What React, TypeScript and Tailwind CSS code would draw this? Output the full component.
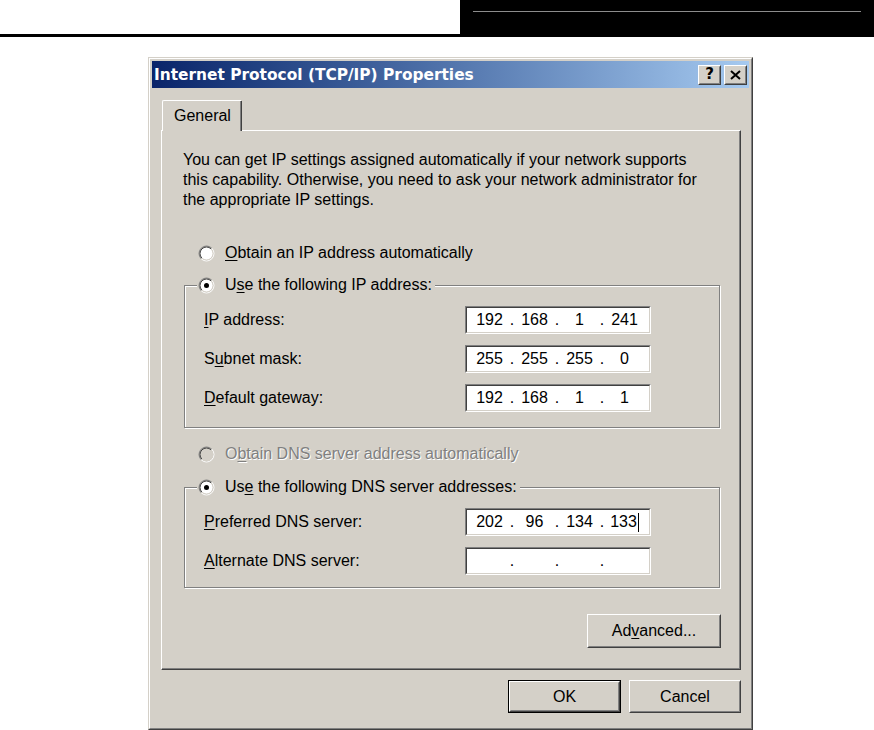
import React from "react";

type RadioProps = { checked?: boolean; disabled?: boolean };

const Radio = ({ checked = false, disabled = false }: RadioProps) => {
  const c = 8.5;
  const arc = (r: number, topLeft: boolean) => {
    const d = r * Math.SQRT1_2;
    return topLeft
      ? `M ${c - d} ${c + d} A ${r} ${r} 0 0 1 ${c + d} ${c - d}`
      : `M ${c + d} ${c - d} A ${r} ${r} 0 0 1 ${c - d} ${c + d}`;
  };
  return (
    <svg width="17" height="17" viewBox="0 0 17 17" className="shrink-0 block">
      <circle cx={c} cy={c} r={6.5} fill={disabled ? "#d4d0c8" : "#ffffff"} />
      <path d={arc(7.5, true)} stroke="#808080" strokeWidth="1" fill="none" />
      <path d={arc(7.5, false)} stroke="#ffffff" strokeWidth="1" fill="none" />
      <path d={arc(6.5, true)} stroke="#404040" strokeWidth="1" fill="none" />
      <path d={arc(6.5, false)} stroke="#d4d0c8" strokeWidth="1" fill="none" />
      {checked && <circle cx={c} cy={c} r={2.5} fill="#000000" />}
    </svg>
  );
};

const U = ({ children }: { children: React.ReactNode }) => (
  <span className="underline underline-offset-[2px]">{children}</span>
);

const Btn = ({
  children,
  className = "",
  isDefault = false,
}: {
  children: React.ReactNode;
  className?: string;
  isDefault?: boolean;
}) => (
  <div className={`${isDefault ? "border border-black" : ""} ${className}`}>
    <div className="h-full border border-t-white border-l-white border-r-[#404040] border-b-[#404040]">
      <div className="h-full border border-t-[#d4d0c8] border-l-[#d4d0c8] border-r-[#808080] border-b-[#808080] flex items-center justify-center">
        {children}
      </div>
    </div>
  </div>
);

const TitleBtn = ({ children, className = "" }: { children: React.ReactNode; className?: string }) => (
  <div className={`w-[23px] h-[20px] bg-[#d4d0c8] border border-t-white border-l-white border-r-[#404040] border-b-[#404040] ${className}`}>
    <div className="h-full border border-t-[#d4d0c8] border-l-[#d4d0c8] border-r-[#808080] border-b-[#808080] flex items-center justify-center">
      {children}
    </div>
  </div>
);

const IpField = ({ parts, caret = false }: { parts: string[]; caret?: boolean }) => (
  <div className="w-[186px] h-[28px] border border-t-[#808080] border-l-[#808080] border-r-white border-b-white">
    <div className="h-full border border-t-[#404040] border-l-[#404040] border-r-[#d4d0c8] border-b-[#d4d0c8] bg-white flex items-center pl-[4px]">
      {parts.map((p, i) => (
        <React.Fragment key={i}>
          <span className="w-[37px] h-[20px] flex items-center justify-center">
            {p}
            {caret && i === 3 && <span className="inline-block w-px h-[19px] bg-black ml-px" />}
          </span>
          {i < 3 && <span className="w-[8px] text-center">.</span>}
        </React.Fragment>
      ))}
    </div>
  </div>
);

const Row = ({ label, parts, caret, className = "" }: { label: React.ReactNode; parts: string[]; caret?: boolean; className?: string }) => (
  <div className={`flex items-center h-[28px] ${className}`}>
    <div className="w-[261px] whitespace-nowrap">{label}</div>
    <IpField parts={parts} caret={caret} />
  </div>
);

const Group = ({
  legend,
  children,
  className = "",
}: {
  legend: React.ReactNode;
  children: React.ReactNode;
  className?: string;
}) => (
  <div className={`relative ml-[22px] w-[536px] border border-[#808080] shadow-[inset_1px_1px_0_#fff,1px_1px_0_#fff] ${className}`}>
    <div className="absolute left-[12px] top-[-11px] h-[20px] flex items-center gap-[10px] bg-[#d4d0c8] pl-px pr-[3px] whitespace-nowrap">
      {legend}
    </div>
    {children}
  </div>
);

export default function App() {
  return (
    <div className="w-[874px] h-[730px] bg-white overflow-hidden font-['Liberation_Sans',Arial,sans-serif] text-black text-[16px] leading-[20px]">
      {/* page header */}
      <div className="flex h-[37px]">
        <div className="w-[460px] border-b-[3px] border-black" />
        <div className="flex-1 bg-black pt-[11px] px-[13px]">
          <div className="h-px bg-[#8c8c8c]" />
        </div>
      </div>

      {/* dialog */}
      <div className="ml-[148px] mt-[20px] w-[605px] h-[673px] border border-t-[#d4d0c8] border-l-[#d4d0c8] border-r-[#404040] border-b-[#404040]">
        <div className="h-full border border-t-white border-l-white border-r-[#808080] border-b-[#808080] bg-[#d4d0c8] p-[2px] flex flex-col">
          {/* title bar */}
          <div className="h-[27px] shrink-0 bg-linear-to-r from-[#0a246a] to-[#a6caf0] flex items-center pl-[2px] pr-[2px]">
            <span className="flex-1 text-white font-bold font-['DejaVu_Sans',sans-serif] text-[15.4px] leading-[20px] whitespace-nowrap">
              Internet Protocol (TCP/IP) Properties
            </span>
            <TitleBtn>
              <span className="font-bold font-['DejaVu_Sans',sans-serif] text-[15px] leading-none text-black">?</span>
            </TitleBtn>
            <TitleBtn className="ml-[3px]">
              <svg width="11" height="10" viewBox="0 0 11 10">
                <path d="M1 1 L10 9 M10 1 L1 9" stroke="#000" strokeWidth="2" fill="none" />
              </svg>
            </TitleBtn>
          </div>

          {/* tab strip */}
          <div className="mt-[12px] h-[30px] ml-[10px] flex">
            <div className="relative z-10 w-[79px] h-[31px] bg-[#d4d0c8] border-l border-t border-white rounded-tl-[2px] flex">
              <div className="flex-1 border-r border-[#808080] flex">
                <div className="flex-1 border-r border-[#404040] -mr-[2px] pl-[11px] pt-[5px]">General</div>
              </div>
            </div>
          </div>

          {/* tab panel */}
          <div className="ml-[9px] w-[580px] h-[540px] border-l border-t border-white border-r border-r-[#404040] border-b border-b-[#404040]">
            <div className="h-full border-r border-b border-[#808080] pt-[19px] flex flex-col">
              <p className="pl-[21px] whitespace-nowrap">
                You can get IP settings assigned automatically if your network supports
                <br />
                this capability. Otherwise, you need to ask your network administrator for
                <br />
                the appropriate IP settings.
              </p>

              <div className="mt-[33px] ml-[36px] h-[20px] flex items-center gap-[10px]">
                <Radio />
                <span>
                  <U>O</U>btain an IP address automatically
                </span>
              </div>

              <Group
                className="mt-[22px] pt-[20px] pb-[15px] pl-[19px]"
                legend={
                  <>
                    <Radio checked />
                    <span>
                      U<U>s</U>e the following IP address:
                    </span>
                  </>
                }
              >
                <Row label={<><U>I</U>P address:</>} parts={["192", "168", "1", "241"]} />
                <Row className="mt-[11px]" label={<>S<U>u</U>bnet mask:</>} parts={["255", "255", "255", "0"]} />
                <Row className="mt-[11px]" label={<><U>D</U>efault gateway:</>} parts={["192", "168", "1", "1"]} />
              </Group>

              <div className="mt-[16px] ml-[36px] h-[20px] flex items-center gap-[10px]">
                <Radio disabled />
                <span className="text-[#808080] [text-shadow:1px_1px_0_#fff]">
                  O<U>b</U>tain DNS server address automatically
                </span>
              </div>

              <Group
                className="mt-[23px] pt-[20px] pb-[12px] pl-[19px]"
                legend={
                  <>
                    <Radio checked />
                    <span>
                      Us<U>e</U> the following DNS server addresses:
                    </span>
                  </>
                }
              >
                <Row label={<><U>P</U>referred DNS server:</>} parts={["202", "96", "134", "133"]} caret />
                <Row className="mt-[11px]" label={<><U>A</U>lternate DNS server:</>} parts={["", "", "", ""]} />
              </Group>

              <div className="mt-[26px] ml-[22px] w-[537px] flex justify-end">
                <Btn className="w-[134px] h-[34px]">
                  <span>
                    Ad<U>v</U>anced...
                  </span>
                </Btn>
              </div>
            </div>
          </div>

          {/* dialog buttons */}
          <div className="mt-[10px] flex justify-end pr-[8px] gap-[8px]">
            <Btn isDefault className="w-[113px] h-[33px]">
              OK
            </Btn>
            <Btn className="w-[112px] h-[33px]">Cancel</Btn>
          </div>
        </div>
      </div>
    </div>
  );
}
